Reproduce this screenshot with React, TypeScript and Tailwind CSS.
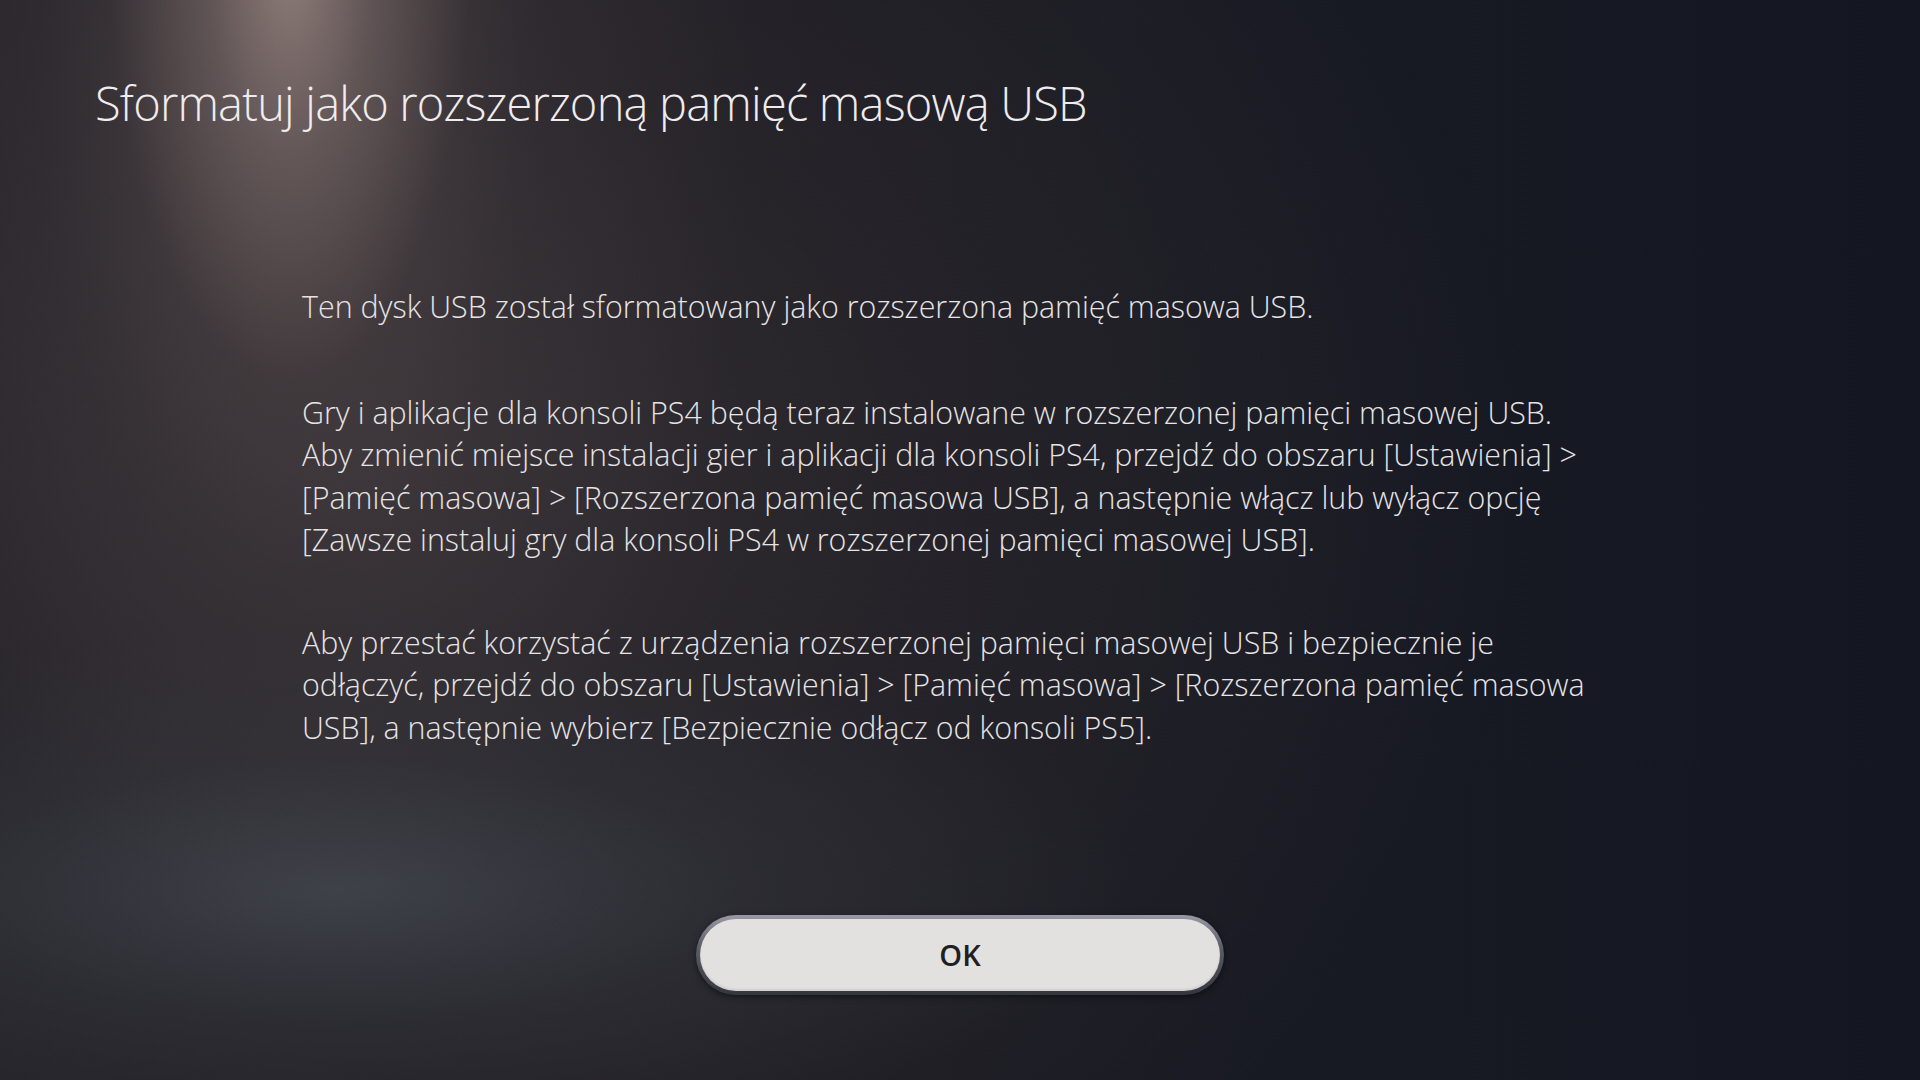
import React from 'react';

const BODY_FONT = "font-['Open_Sans',_'Noto_Sans',_sans-serif]";

function Paragraph({ lines, className = '' }: { lines: string[]; className?: string }) {
  return (
    <p className={`text-[30.4px] leading-[42.5px] font-light text-[#e6e4e6] ${className}`}>
      {lines.map((line, i) => (
        <React.Fragment key={i}>
          {line}
          {i < lines.length - 1 && <br />}
        </React.Fragment>
      ))}
    </p>
  );
}

export default function App() {
  return (
    <div
      className={`relative flex h-[1080px] w-[1920px] flex-col overflow-hidden ${BODY_FONT} bg-[#1a1b23] bg-[radial-gradient(ellipse_240px_560px_at_290px_-40px,rgba(150,132,128,0.9)_0%,rgba(125,108,106,0.55)_35%,rgba(70,60,62,0.18)_75%,transparent_100%),radial-gradient(ellipse_460px_820px_at_290px_120px,rgba(115,100,100,0.38)_0%,rgba(85,74,76,0.18)_55%,transparent_100%),radial-gradient(ellipse_800px_260px_at_340px_890px,rgba(68,72,80,0.8)_0%,rgba(52,55,62,0.45)_50%,transparent_100%),radial-gradient(ellipse_1150px_950px_at_380px_480px,rgba(54,49,53,0.95)_0%,rgba(42,39,44,0.7)_45%,transparent_100%),linear-gradient(90deg,#222027_0%,#1f1d24_35%,#181a23_65%,#141722_100%)]`}
    >
      <h1 className="mt-[70px] pl-[95px] text-[47px] leading-[67px] font-light tracking-[-0.8px] text-[#eeecee]">
        Sformatuj jako rozszerzoną pamięć masową USB
      </h1>

      <div className="mt-[149px] pl-[302px]">
        <Paragraph lines={['Ten dysk USB został sformatowany jako rozszerzona pamięć masowa USB.']} />
        <Paragraph
          className="mt-[63px]"
          lines={[
            'Gry i aplikacje dla konsoli PS4 będą teraz instalowane w rozszerzonej pamięci masowej USB.',
            'Aby zmienić miejsce instalacji gier i aplikacji dla konsoli PS4, przejdź do obszaru [Ustawienia] >',
            '[Pamięć masowa] > [Rozszerzona pamięć masowa USB], a następnie włącz lub wyłącz opcję',
            '[Zawsze instaluj gry dla konsoli PS4 w rozszerzonej pamięci masowej USB].',
          ]}
        />
        <Paragraph
          className="mt-[60px]"
          lines={[
            'Aby przestać korzystać z urządzenia rozszerzonej pamięci masowej USB i bezpiecznie je',
            'odłączyć, przejdź do obszaru [Ustawienia] > [Pamięć masowa] > [Rozszerzona pamięć masowa',
            'USB], a następnie wybierz [Bezpiecznie odłącz od konsoli PS5].',
          ]}
        />
      </div>

      <div className="mt-[166px] flex justify-center">
        <div className="rounded-full bg-[linear-gradient(180deg,#9a98a6_0%,#5c5e68_40%,#34363e_100%)] p-[4px] shadow-[0_2px_6px_rgba(0,0,0,0.5)]">
          <button className="flex h-[72px] w-[520px] items-center justify-center rounded-full bg-[#e2e1df] text-[29px] font-semibold text-[#202022] shadow-[inset_0_-2px_2px_rgba(0,0,0,0.08)]">
            OK
          </button>
        </div>
      </div>
    </div>
  );
}
